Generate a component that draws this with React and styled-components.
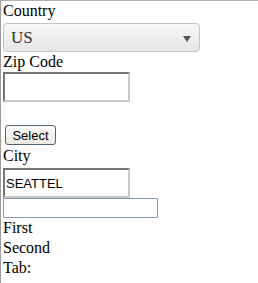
import React from "react";
import styled, { createGlobalStyle } from "styled-components";

const Global = createGlobalStyle`
  html, body { margin: 0; padding: 0; background: #fff; }
  body { font-family: "Liberation Serif", "Times New Roman", serif; font-size: 16px; color: #000; }
`;

const Frame = styled.div`
  width: 258px;
  height: 283px;
  box-sizing: border-box;
  border-left: 1px solid #9a9a9a;
  border-top: 1px solid #b0b0b0;
  padding: 0 0 0 2px;
  display: flex;
  flex-direction: column;
  align-items: flex-start;
  overflow: hidden;
`;

const Label = styled.div`
  line-height: 20px;
  height: ${(p) => p.$h || 20}px;
`;

const SelectBox = styled.div`
  box-sizing: border-box;
  width: 197px;
  height: 29px;
  border: 1px solid #c4c4c4;
  border-radius: 4px;
  background: linear-gradient(#f7f7f7, #e6e6e6);
  display: flex;
  align-items: center;
  justify-content: space-between;
  padding: 0 8px 0 7px;
  font-family: "Liberation Serif", "Times New Roman", serif;
  font-size: 17px;
  color: #333;
`;

const Arrow = styled.span`
  width: 0;
  height: 0;
  border-left: 4px solid transparent;
  border-right: 4px solid transparent;
  border-top: 6px solid #555;
  margin-top: 2px;
`;

const InsetInput = styled.div`
  box-sizing: border-box;
  width: 127px;
  height: 30px;
  border-style: solid;
  border-width: 2px;
  border-color: #767676 #c8c8c8 #c8c8c8 #767676;
  font-family: "Liberation Sans", Arial, sans-serif;
  font-size: 13px;
  display: flex;
  align-items: center;
  padding-left: 1px;
  background: #fff;
`;

const FlatInput = styled.div`
  box-sizing: border-box;
  width: 155px;
  height: 20px;
  border: 1px solid #8a9cb0;
  background: #fff;
`;

const Button = styled.div`
  margin: ${(p) => p.$mt}px 0 1px 2px;
  box-sizing: border-box;
  width: 51px;
  height: 20px;
  border: 1px solid #4e6278;
  border-radius: 3px;
  background: linear-gradient(#fbfbf9, #ece9e2);
  font-family: "Liberation Sans", Arial, sans-serif;
  font-size: 13px;
  display: flex;
  align-items: center;
  justify-content: center;
`;

export default function App() {
  return (
    <>
      <Global />
      <Frame>
        <Label $h={22}>Country</Label>
        <SelectBox>
          <span>US</span>
          <Arrow />
        </SelectBox>
        <Label>Zip Code</Label>
        <InsetInput />
        <Button $mt={23}>Select</Button>
        <Label $h={22}>City</Label>
        <InsetInput>SEATTEL</InsetInput>
        <FlatInput />
        <Label>First</Label>
        <Label>Second</Label>
        <Label>Tab:</Label>
      </Frame>
    </>
  );
}
